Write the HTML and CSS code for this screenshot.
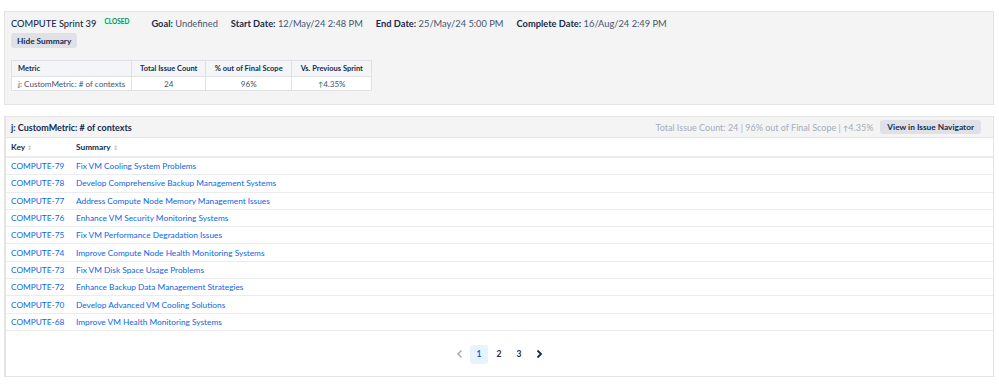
FILE: index.html
```html
<!DOCTYPE html>
<html lang="en">
<head>
  <meta charset="UTF-8" />
  <title>COMPUTE Sprint 39</title>
  <link rel="stylesheet" href="styles.css">
</head>
<body>

  <div class="summary">
    <div class="sprint-head">
      <span class="sprint-name">COMPUTE Sprint 39</span>
      <span class="lozenge">CLOSED</span>
      <span class="field"><b>Goal:</b> Undefined</span>
      <span class="field"><b>Start Date:</b> 12/May/24 2:48 PM</span>
      <span class="field"><b>End Date:</b> 25/May/24 5:00 PM</span>
      <span class="field"><b>Complete Date:</b> 16/Aug/24 2:49 PM</span>
    </div>
    <button class="btn">Hide Summary</button>

    <table class="metrics">
      <thead>
        <tr>
          <th class="col-metric">Metric</th>
          <th class="col-count">Total Issue Count</th>
          <th class="col-scope">% out of Final Scope</th>
          <th class="col-prev">Vs. Previous Sprint</th>
        </tr>
      </thead>
      <tbody>
        <tr>
          <td>j: CustomMetric: # of contexts</td>
          <td class="center">24</td>
          <td class="center">96%</td>
          <td class="center"><span class="up">&#8593;</span>4.35%</td>
        </tr>
      </tbody>
    </table>
  </div>

  <div class="issues">
    <div class="issues-head">
      <span class="issues-title">j: CustomMetric: # of contexts</span>
      <div class="issues-meta">
        <span class="stats">Total Issue Count: 24 | 96% out of Final Scope | <span class="up-gray">&#8593;</span>4.35%</span>
        <button class="btn">View in Issue Navigator</button>
      </div>
    </div>

    <table class="issue-table">
      <thead>
        <tr>
          <th class="col-key">Key <span class="sort">&#8661;</span></th>
          <th>Summary <span class="sort">&#8661;</span></th>
        </tr>
      </thead>
      <tbody>
        <tr><td><a href="#">COMPUTE-79</a></td><td><a href="#">Fix VM Cooling System Problems</a></td></tr>
        <tr><td><a href="#">COMPUTE-78</a></td><td><a href="#">Develop Comprehensive Backup Management Systems</a></td></tr>
        <tr><td><a href="#">COMPUTE-77</a></td><td><a href="#">Address Compute Node Memory Management Issues</a></td></tr>
        <tr><td><a href="#">COMPUTE-76</a></td><td><a href="#">Enhance VM Security Monitoring Systems</a></td></tr>
        <tr><td><a href="#">COMPUTE-75</a></td><td><a href="#">Fix VM Performance Degradation Issues</a></td></tr>
        <tr><td><a href="#">COMPUTE-74</a></td><td><a href="#">Improve Compute Node Health Monitoring Systems</a></td></tr>
        <tr><td><a href="#">COMPUTE-73</a></td><td><a href="#">Fix VM Disk Space Usage Problems</a></td></tr>
        <tr><td><a href="#">COMPUTE-72</a></td><td><a href="#">Enhance Backup Data Management Strategies</a></td></tr>
        <tr><td><a href="#">COMPUTE-70</a></td><td><a href="#">Develop Advanced VM Cooling Solutions</a></td></tr>
        <tr><td><a href="#">COMPUTE-68</a></td><td><a href="#">Improve VM Health Monitoring Systems</a></td></tr>
      </tbody>
    </table>

    <div class="pager">
      <span class="page-arrow disabled">
        <svg width="8" height="10" viewBox="0 0 8 10"><path d="M5.5 1.5 2 5l3.5 3.5" fill="none" stroke="currentColor" stroke-width="1.5"/></svg>
      </span>
      <span class="page current">1</span>
      <span class="page">2</span>
      <span class="page">3</span>
      <span class="page-arrow">
        <svg width="8" height="10" viewBox="0 0 8 10"><path d="M2.5 1.5 6 5 2.5 8.5" fill="none" stroke="currentColor" stroke-width="1.8"/></svg>
      </span>
    </div>
  </div>

</body>
</html>
```

FILE: styles.css
```css
body {
  margin: 11px 5px 0 4px;
  font-family: 'Segoe UI', Lato, 'Noto Sans', sans-serif;
  font-size: 9px;
  color: #172b4d;
  background: #fff;
}

b {
  font-weight: 700;
}

.summary {
  background: #f4f4f4;
  border: 1px solid #e4e4e4;
  height: 92px;
  padding: 0 6px;
}

.sprint-head {
  display: flex;
  align-items: center;
  height: 20px;
  padding-top: 1px;
}

.sprint-name {
  font-size: 9.3px;
  font-weight: 500;
}

.lozenge {
  margin-left: 5px;
  padding: 0 3px;
  font-size: 6.5px;
  font-weight: 700;
  color: #1f845a;
  background: #dcfff1;
  border-radius: 2px;
  line-height: 9px;
  margin-top: -3px;
}

.field {
  margin-left: 13px;
  font-size: 9.3px;
  color: #44546f;
}

.sprint-name + .lozenge + .field {
  margin-left: 19px;
}

.field b {
  color: #172b4d;
}

.btn {
  font-family: inherit;
  font-size: 8.3px;
  font-weight: 700;
  color: #172b4d;
  background: #dfe1e6;
  border: none;
  border-radius: 3px;
  padding: 0 6px;
  height: 14px;
  line-height: 14px;
  cursor: pointer;
}

.summary .btn {
  display: block;
  height: 15px;
}

.metrics {
  margin-top: 12px;
  border-collapse: collapse;
  background: #fff;
  font-size: 8.1px;
  white-space: nowrap;
}

.metrics th,
.metrics td {
  border: 1px solid #dfe1e6;
  padding: 0 6px;
  height: 13px;
  color: #44546f;
}

.metrics th {
  background: #f4f5f7;
  font-weight: 700;
  font-size: 7.5px;
  color: #172b4d;
  height: 15px;
}

.metrics .col-metric {
  text-align: left;
  width: 106px;
}

.col-count { width: 61px; }
.col-scope { width: 73px; }
.col-prev { width: 67px; }

.center {
  text-align: center;
}

.up {
  color: #22a06b;
  font-size: 7px;
  font-weight: 700;
}

.up-gray {
  font-size: 7px;
  font-weight: 700;
}

.issues {
  margin-top: 11px;
  border: 1px solid #e4e4e4;
  border-left-width: 2px;
  height: 259px;
}

.issues-head {
  display: flex;
  justify-content: space-between;
  align-items: center;
  background: #f4f4f4;
  height: 20px;
  padding: 0 12px 0 5px;
  border-bottom: 1px solid #e4e4e4;
}

.issues-title {
  font-weight: 700;
  font-size: 9px;
}

.issues-meta {
  display: flex;
  align-items: center;
  gap: 7px;
}

.stats {
  color: #a5adba;
  font-size: 9px;
}

.issues-meta .btn {
  padding: 0 7px;
}

.issue-table {
  width: 100%;
  border-collapse: collapse;
  font-size: 8.3px;
  white-space: nowrap;
}

.issue-table th {
  text-align: left;
  font-weight: 700;
  font-size: 8.3px;
  height: 18px;
  padding: 0 5px;
  border-bottom: 2px solid #ebecf0;
}

.issue-table .col-key {
  width: 55px;
}

.sort {
  color: #a5adba;
  font-size: 6px;
  font-weight: 400;
}

.issue-table td {
  height: 16.3px;
  padding: 0 5px;
  border-bottom: 1px solid #ebecf0;
}

.issue-table a {
  color: #0c66e4;
  text-decoration: none;
}

.pager {
  display: flex;
  justify-content: center;
  align-items: center;
  margin-top: 14px;
}

.page,
.page-arrow {
  width: 20px;
  height: 19px;
  display: flex;
  align-items: center;
  justify-content: center;
  font-size: 8.5px;
  font-weight: 700;
  color: #172b4d;
}

.page-arrow.disabled {
  color: #a5adba;
}

.page.current {
  background: #e9f2ff;
  color: #0c66e4;
  border-radius: 3px;
  width: 18px;
  margin-right: 1px;
}
```
